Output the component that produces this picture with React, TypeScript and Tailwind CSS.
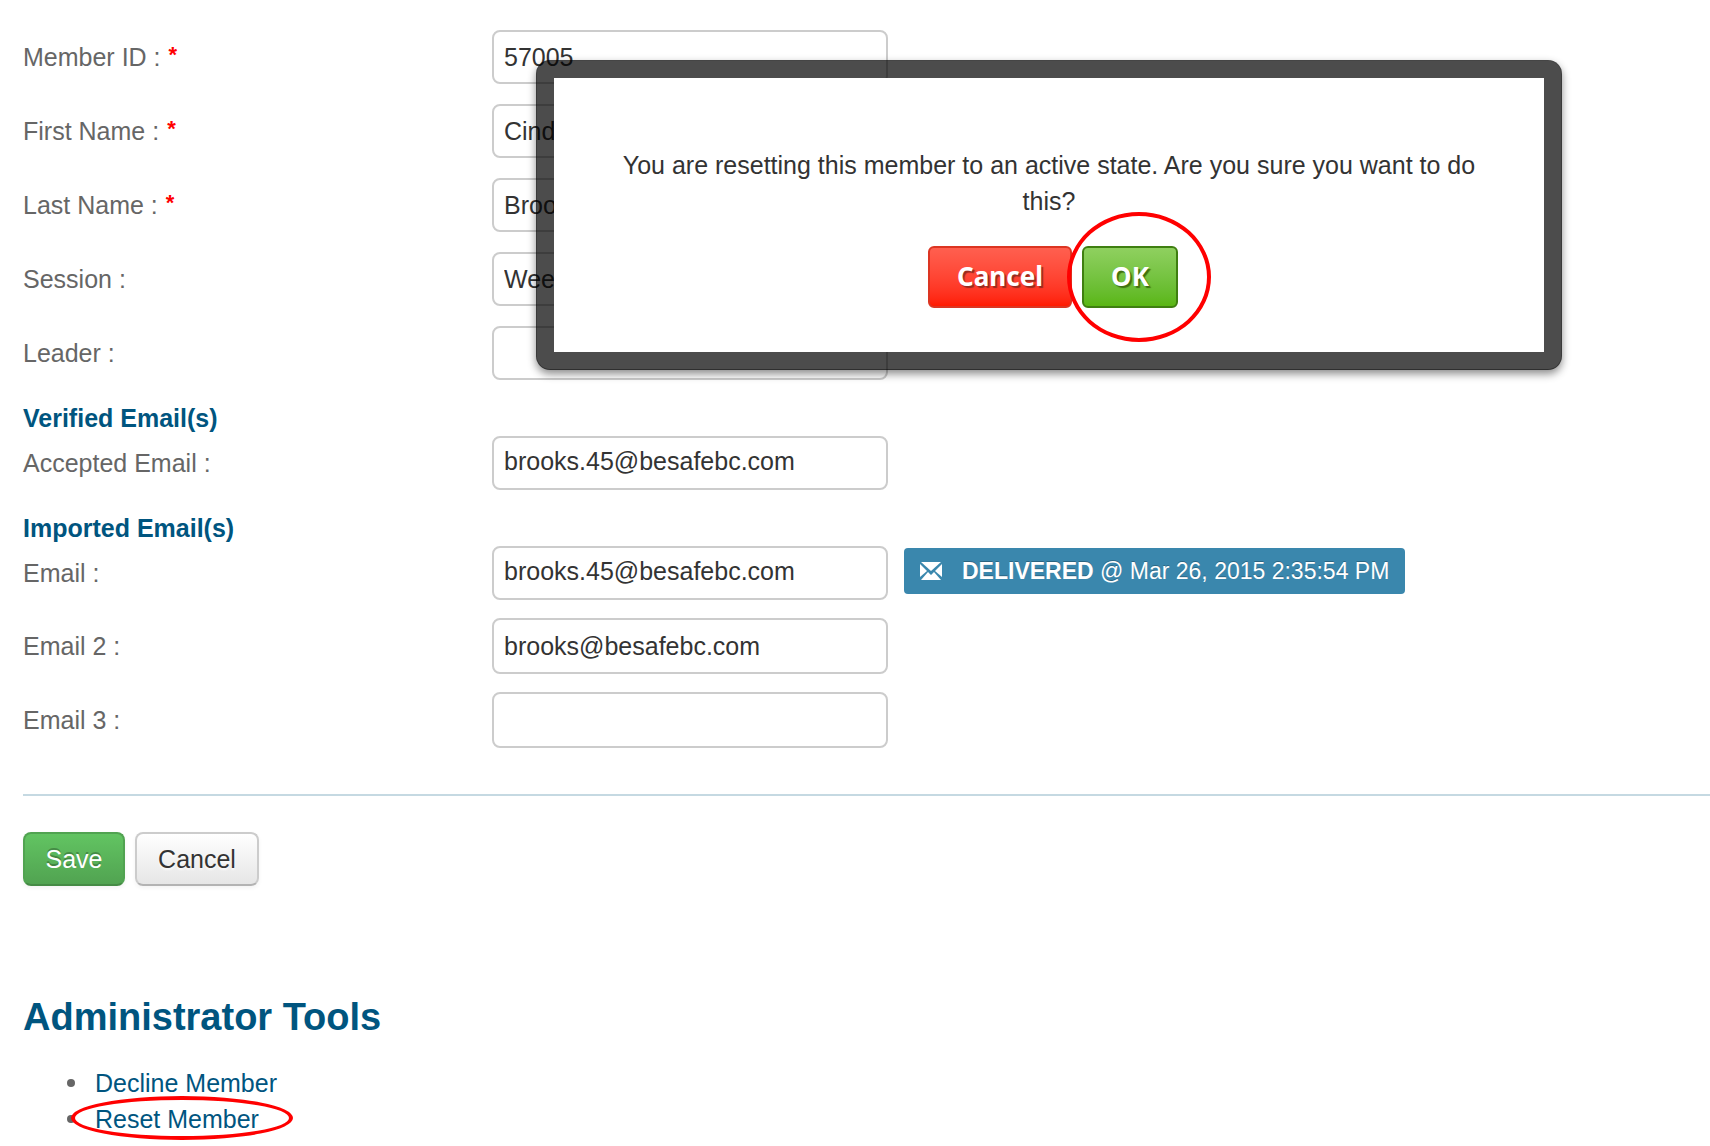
import React from "react";
import clsx from "clsx";

interface IFieldProps {
  id: string;
  label: string;
  value?: string;
  required?: boolean;
  inputClass?: string;
  children?: React.ReactNode;
}

const Field: React.FC<IFieldProps> = ({
  id,
  label,
  value,
  required,
  inputClass = "h-[54px]",
  children,
}) => {
  return (
    <div className="flex items-center">
      <label htmlFor={id} className="flex w-[469px] shrink-0 gap-2 text-[#666666]">
        <span>{label} :</span>
        {required && <span className="text-[22px] leading-[32px] font-bold text-[#ff0000]">*</span>}
      </label>
      <input
        id={id}
        type="text"
        defaultValue={value}
        className={clsx(
          "w-[396px] shrink-0 rounded-lg border-2 border-[#cccccc] bg-white px-[10px] text-[#333333] outline-none",
          inputClass
        )}
      />
      {children}
    </div>
  );
};

const DeliveredBadge: React.FC = () => {
  return (
    <div className="mb-1 ml-4 flex h-[46px] items-center rounded bg-[#3a87ad] px-4 text-[23px] whitespace-nowrap text-white [text-shadow:0_-1px_0_rgba(0,0,0,0.25)]">
      <svg viewBox="0 0 22 18" className="mr-5 h-[20px] w-[22px]" fill="#ffffff">
        <path d="M1 0h20L11 9z" />
        <path d="M0 2l7 7-7 6z" />
        <path d="M22 2l-7 7 7 6z" />
        <path d="M1 18l7-8 3 3 3-3 7 8z" />
      </svg>
      <span>
        <strong>DELIVERED</strong> @ Mar 26, 2015 2:35:54 PM
      </span>
    </div>
  );
};

const ConfirmDialog: React.FC = () => {
  return (
    <div
      role="dialog"
      aria-label="Reset member"
      className="absolute top-[60px] left-[536px] w-[1026px] rounded-[14px] border-[18px] border-black/70 bg-white bg-clip-padding px-[60px] pt-[69px] pb-[44px] text-center text-[#333333] shadow-[0_4px_8px_rgba(0,0,0,0.45)]"
    >
      <p>You are resetting this member to an active state. Are you sure you want to do this?</p>
      <div className="mt-[27px] flex justify-center gap-[10px] pl-2 font-['Noto_Sans'] text-[26px] font-bold text-white">
        <button
          type="button"
          className="h-[62px] w-[144px] rounded-md border-2 border-[#dc3522] bg-linear-to-b from-[#ff5f4f] to-[#ff1a00] pb-0.5 [text-shadow:2px_2px_1px_#982b1f]"
        >
          Cancel
        </button>
        <div className="relative">
          <button
            type="button"
            className="h-[62px] w-[96px] rounded-md border-2 border-[#3f7f10] bg-linear-to-b from-[#8fd05f] to-[#5ab612] pb-0.5 [text-shadow:2px_2px_1px_#3f7010]"
          >
            OK
          </button>
          <span className="pointer-events-none absolute -top-[34px] -left-[15px] h-[130px] w-[144px] rounded-[50%] border-4 border-[#ff0000]" />
        </div>
      </div>
    </div>
  );
};

const App: React.FC = () => {
  return (
    <main className="relative min-h-screen overflow-hidden bg-white pl-[23px] font-['Liberation_Sans',sans-serif] text-[25px] leading-[36px]">
      <form onSubmit={(e) => e.preventDefault()}>
        <div className="flex flex-col gap-5 pt-[30px]">
          <Field id="memberId" label="Member ID" value="57005" required />
          <Field id="firstName" label="First Name" value="Cindy" required />
          <Field id="lastName" label="Last Name" value="Brooks" required />
          <Field id="session" label="Session" value="Week" />
          <Field id="leader" label="Leader" />
        </div>

        <h3 className="mt-5 font-bold text-[#00557f]">Verified Email(s)</h3>
        <Field
          id="acceptedEmail"
          label="Accepted Email"
          value="brooks.45@besafebc.com"
          inputClass="h-[54px] pb-1"
        />

        <h3 className="mt-5 font-bold text-[#00557f]">Imported Email(s)</h3>
        <div className="flex flex-col gap-[18px]">
          <Field
            id="email"
            label="Email"
            value="brooks.45@besafebc.com"
            inputClass="h-[54px] pb-1"
          >
            <DeliveredBadge />
          </Field>
          <Field id="email2" label="Email 2" value="brooks@besafebc.com" inputClass="h-[56px]" />
          <Field id="email3" label="Email 3" inputClass="h-[56px]" />
        </div>

        <hr className="mt-[46px] border-t-2 border-[#c5d9e2]" />

        <div className="mt-9 flex gap-[10px]">
          <button
            type="submit"
            className="h-[54px] w-[102px] rounded-lg border-2 border-[#51a351] border-b-[#458b45] bg-linear-to-b from-[#62c462] to-[#51a351] text-white shadow-[0_2px_4px_rgba(0,0,0,0.05)] [text-shadow:0_-2px_0_rgba(0,0,0,0.25)]"
          >
            Save
          </button>
          <button
            type="button"
            className="h-[54px] w-[124px] rounded-lg border-2 border-[#cccccc] border-b-[#b3b3b3] bg-linear-to-b from-white to-[#e6e6e6] text-[#333333] shadow-[0_2px_4px_rgba(0,0,0,0.05)] [text-shadow:0_2px_2px_rgba(255,255,255,0.75)]"
          >
            Cancel
          </button>
        </div>
      </form>

      <h2 className="mt-[109px] text-[38px] leading-[44px] font-bold text-[#00557f]">
        Administrator Tools
      </h2>
      <ul className="mt-[26px] pl-11">
        <li className="flex items-center gap-5 before:size-2 before:rounded-full before:bg-[#666666] before:content-['']">
          <a href="#decline" className="text-[#00557f]">
            Decline Member
          </a>
        </li>
        <li className="relative flex items-center gap-5 before:size-2 before:rounded-full before:bg-[#666666] before:content-['']">
          <a href="#reset" className="text-[#00557f]">
            Reset Member
          </a>
          <span className="pointer-events-none absolute -top-[5px] left-1 h-[44px] w-[222px] rounded-[50%] border-4 border-[#ff0000]" />
        </li>
      </ul>

      <ConfirmDialog />
    </main>
  );
};

export default App;
